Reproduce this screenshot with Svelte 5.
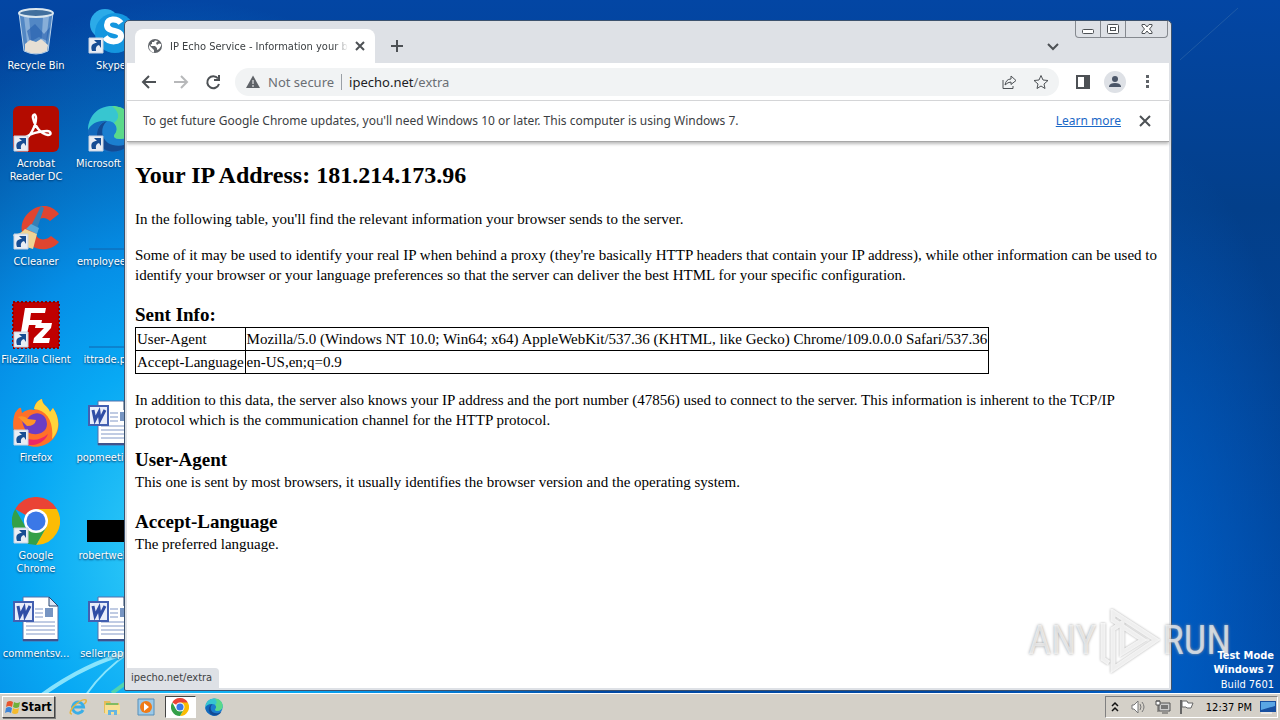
<script>
  const icons = [
    { kind: 'bin', label: 'Recycle Bin', link: false },
    { kind: 'skype', label: 'Skype', link: true },
    { kind: 'acrobat', label: 'Acrobat Reader DC', link: true },
    { kind: 'edge', label: 'Microsoft Ed...', link: true, single: true },
    { kind: 'ccleaner', label: 'CCleaner', link: true },
    { kind: 'line', label: 'employeem...', link: false },
    { kind: 'filezilla', label: 'FileZilla Client', link: true },
    { kind: 'line', label: 'ittrade.png', link: false },
    { kind: 'firefox', label: 'Firefox', link: true },
    { kind: 'word', label: 'popmeeting...', link: false },
    { kind: 'chrome', label: 'Google Chrome', link: true },
    { kind: 'black', label: 'robertwebs...', link: false },
    { kind: 'word', label: 'commentsv...', link: false },
    { kind: 'word', label: 'sellerrapid...', link: false }
  ];
  const rows = [
    ['User-Agent', 'Mozilla/5.0 (Windows NT 10.0; Win64; x64) AppleWebKit/537.36 (KHTML, like Gecko) Chrome/109.0.0.0 Safari/537.36'],
    ['Accept-Language', 'en-US,en;q=0.9']
  ];
</script>

{#snippet chromeMark()}
  <path d="M24 24 3.200 12A24 24 0 0 1 44.800 12Z" fill="#ea4335" />
  <path d="M24 12H44.800A24 24 0 0 1 24 48L34.400 30Z" fill="#fbbc04" />
  <path d="M3.200 12A24 24 0 0 0 24 48L34.400 30H24L13.600 30Z" fill="#34a048" />
  <circle cx="24" cy="24" r="12" fill="#fff" />
  <circle cx="24" cy="24" r="9.500" fill="#3b78e7" />
{/snippet}

{#snippet edgeMark()}
  <circle cx="24" cy="24" r="23" fill="#1b7fd0" />
  <path d="M1 24C2 10 12 1 25 1c13 0 22 9 22 20 0 8-6 13-14 13-6 0-7-3-5-5 4-5 1-13-8-13C10 16 3 22 1 28Z" fill="#37c6d0" />
  <path d="M25 1c13 0 22 9 22 20 0 8-6 13-14 13-6 0-7-3-5-5 3-4 2-8-1-11C35 12 30 5 25 1Z" fill="#5bd98a" />
  <path d="M20 16c-8 1-12 10-8 19 4 8 14 13 24 10-6 3-14 3-20 0C5 40 0 31 1 25c3-6 10-10 19-9Z" fill="#1269bd" />
  <path d="M20 16c-7 6-6 17 1 22 7 4 16 4 23-2-4 8-13 12-22 10C8 43 5 20 20 16Z" fill="#134b94" />
{/snippet}

<div class="screen">
  <main class="desktop">
    <svg class="rays" viewBox="0 0 1280 693" preserveAspectRatio="none" aria-hidden="true">
      <path d="M42 695Q85 664 130 652" />
      <path d="M86 695Q102 671 130 652" class="thin" />
      <path d="M1180 60 1238 8" class="faint" />
      <path d="M112 693 130 680" class="green" />
    </svg>

    <div class="icons">
      {#each icons as icon}
        <button class="shortcut">
          <span class="art">
            <svg viewBox="0 0 48 48" aria-hidden="true">
              {#if icon.kind === 'bin'}
                <path d="M7 6 12 44Q24 50 36 44L41 6Z" fill="#6e9ed0" fill-opacity=".75" stroke="#b8d2eb" />
                <path d="M12 10 16 43H20L17 10ZM31 10 29 43H33L37 10Z" fill="#c8def2" opacity=".45" />
                <path d="m15 24 8-7 9 10 6-7-3 14-8-4-9 5Z" fill="#245eae" opacity=".6" />
                <path d="m13 37 5-4 6 2 5-3 7 6-1 6q-11 5-22 0Z" fill="#e6dfd4" />
                <ellipse cx="24" cy="6" rx="17" ry="4" fill="#416f9e" stroke="#dbe7ef" stroke-width="2" />
              {:else if icon.kind === 'skype'}
                <circle cx="18" cy="17" r="15" fill="#2cabe8" /><circle cx="28" cy="26" r="20" fill="#1496df" />
                <path d="M34 16C30 11 20 11 20 18c0 8 14 4 14 11 0 7-12 7-16 1" fill="none" stroke="#fff" stroke-width="6" />
              {:else if icon.kind === 'acrobat'}
                <rect x="1" y="1" width="46" height="46" rx="6" fill="#b30b00" />
                <path d="M13 34c5-2 11-13 11-21 0-5-4-4-3 0 2 9 8 16 15 17 4 0 3-4-1-4-8 0-17 3-21 6-3 2-3 4-1 2Z" fill="none" stroke="#fff" stroke-width="2.500" />
              {:else if icon.kind === 'edge'}
                {@render edgeMark()}
              {:else if icon.kind === 'ccleaner'}
                <path d="M47 11 38 18C30 10 20 19 23 30c3 9 12 7 16 3l8 6C36 52 14 47 10 29 6 10 33-8 47 11Z" fill="#df4530" />
                <path d="m29 3 3 2-7 21-6-3Z" fill="#347fb5" /><path d="m19 21 8 4-2 6-11-5Z" fill="#57a8d7" />
                <path d="m13 26 12 5-4 15Q7 43 1 32 9 31 13 26Z" fill="#f0d394" />
              {:else if icon.kind === 'filezilla'}
                <rect x="1" y="1" width="46" height="46" fill="#bf0000" stroke="#8d0000" stroke-width="2" stroke-dasharray="2 2" />
                <path d="M13 7H34L33 12H19L18 19H30L29 24H17L14 37H8ZM24 22H40L39 27 30 37H38L37 42H21L22 37 32 27H23Z" fill="#fff" />
              {:else if icon.kind === 'firefox'}
                <path d="M3 14q4-6 6-5l1 5q6-5 13-3c-2-5 3-10 7-11 0 6 6 7 8 13l3-4c7 10 8 23-1 32-9 9-24 9-33 0C0 34 0 23 3 14Z" fill="#ff7028" />
                <path d="M22 10c1-5 4-9 8-10 0 6 6 7 8 13l3-4c8 12 6 24-1 31 2-17-5-29-18-30Z" fill="#ffd43b" />
                <path d="M5 30c4 11 20 15 31 5-4 10-15 13-24 10-5-2-9-8-7-15Z" fill="#ee2866" />
                <path d="M14 24c2-12 20-14 21 1 0 12-19 14-23 3-2-4-1-7-5-9 4-1 8 0 9 4Z" fill="#6b3dc4" />
                <path d="M6 18q6-2 10 2l8 1q-1 6-9 6-5-5-9-9Z" fill="#ff9426" />
              {:else if icon.kind === 'chrome'}
                {@render chromeMark()}
              {:else if icon.kind === 'word'}
                <path d="M11 2H37L46 11V46H11Z" fill="#fff" stroke="#5370ac" />
                <path d="M37 2V11H46Z" fill="#dbe6f6" stroke="#28456f" />
                <path d="M23 14H31M23 18H31M23 22H31M14 27H43M14 31H43M14 35H43M14 39H43" stroke="#8198c7" />
                <rect x="33" y="13" width="8" height="9" fill="#7795c2" /><path d="M11 45H46" stroke="#41538c" stroke-width="2" />
                <rect x="2" y="7" width="19" height="19" fill="#e9edfa" stroke="#4360b1" stroke-width="2" />
                <path d="M6 11 8 21 12 13 13 21 18 11" fill="none" stroke="#304ea6" stroke-width="3" />
              {:else if icon.kind === 'black'}
                <path d="M0 23H48V45H0Z" fill="#000" />
              {:else}
                <path d="M2 46H48" stroke="#1165ae" stroke-width="1" />
              {/if}
              {#if icon.link}
                <path d="M2 31H16V46H2Z" fill="#e9edf4" stroke="#c7d2e2" />
                <path d="M5 44C3 38 6 36 10 36L7 33H14V41L12 38Q8 39 9 44Z" fill="#174d93" />
              {/if}
            </svg>
          </span>
          <span class="label" class:single={icon.single}>{icon.label}</span>
        </button>
      {/each}
    </div>

    <div class="build"><b>Test Mode</b><b>Windows 7</b><span>Build 7601</span></div>

    <section class="window" aria-label="IP Echo Service">
      <header class="tabs">
        <div class="tab">
          <svg class="i16" viewBox="0 0 16 16" aria-hidden="true"><circle cx="8" cy="8" r="7" fill="#5f6368" /><path d="M2 7 7 12V14.500Q1.500 13.500 2 7ZM8 2.500 7 4H5V6L3.500 6.500 4 8H8L10 10V12L12 11 14 8V6L12 5.500 10 7 9 5 11 3Z" fill="#fff" /></svg>
          <span class="title">IP Echo Service - Information your b</span>
          <button aria-label="Close tab"><svg class="i16" viewBox="0 0 16 16"><path d="M4 4 12 12M12 4 4 12" /></svg></button>
        </div>
        <button class="plus" aria-label="New tab"><svg class="i16" viewBox="0 0 16 16"><path d="M2 8H14M8 2V14" /></svg></button>
        <button class="search" aria-label="Search tabs"><svg class="i16" viewBox="0 0 16 16"><path d="M3 6 8 11 13 6" /></svg></button>
        <div class="controls">
          <button aria-label="Minimize"><svg viewBox="0 0 24 16"><rect x="6.500" y="8.500" width="11" height="4" rx="1" /></svg></button>
          <button aria-label="Restore"><svg viewBox="0 0 24 16"><rect x="6.500" y="3.500" width="11" height="9" rx="1" /><rect x="9.500" y="6.500" width="5" height="3" /></svg></button>
          <button class="wide" aria-label="Close"><svg viewBox="0 0 24 16"><path d="M7 3.500H10L12 6 14 3.500H17V5L14.500 8 17 11V12.500H14L12 10 10 12.500H7V11L9.500 8 7 5Z" /></svg></button>
        </div>
      </header>

      <nav class="toolbar">
        <button aria-label="Back"><svg class="i16" viewBox="0 0 16 16"><path d="M15 8H2M8 2 2 8 8 14" /></svg></button>
        <button class="off" aria-label="Forward"><svg class="i16" viewBox="0 0 16 16"><path d="M1 8H14M8 2 14 8 8 14" /></svg></button>
        <button aria-label="Reload"><svg class="i16" viewBox="0 0 16 16"><path d="M13 4.500A6 6 0 1 0 14 10M14 1V6H9" /></svg></button>
        <div class="address">
          <svg class="i16" viewBox="0 0 16 16" aria-hidden="true"><path d="M8 1.500 15 14H1Z" fill="#5f6368" stroke="none" /><path d="M8 6V10M8 11V13" stroke="#fff" /></svg>
          <span class="grey">Not secure</span><i></i>
          <a class="url" href="#extra">ipecho.net<span class="grey">/extra</span></a>
          <button class="share" aria-label="Share"><svg class="i16" viewBox="0 0 16 16"><path d="M2 6V14.500H12V12M4 11Q5 5 10 5V2L15 6.500 10 10.500V8Q7 8 4 11Z" stroke-width="1" /></svg></button>
          <button aria-label="Bookmark"><svg class="i16" viewBox="0 0 16 16"><path d="m8 1.500 2 4.500 5 .5-4 3.500 1 4.500-4-2.500-4 2.500 1-4.500L1 6.500 6 6Z" /></svg></button>
        </div>
        <button aria-label="Side panel"><svg class="i16" viewBox="0 0 16 16"><path d="M2 2H14V14H2Z" /><path d="M10 2H14V14H10Z" fill="#4d5155" /></svg></button>
        <button class="person" aria-label="Profile"><svg class="i16" viewBox="0 0 16 16"><circle cx="8" cy="5" r="3" fill="#4b5668" stroke="none" /><path d="M2 13V12Q3 9 8 9T14 12V13Z" fill="#4b5668" stroke="none" /></svg></button>
        <button aria-label="Menu"><svg class="i16" viewBox="0 0 16 16"><path d="M7 1H10V4H7ZM7 6H10V9H7ZM7 11H10V14H7Z" fill="#5f6368" stroke="none" /></svg></button>
      </nav>

      <div class="notice">
        <span>To get future Google Chrome updates, you'll need Windows 10 or later. This computer is using Windows 7.</span>
        <a href="#more">Learn more</a>
        <button aria-label="Dismiss"><svg class="i16" viewBox="0 0 16 16"><path d="M3 3 13 13M13 3 3 13" /></svg></button>
      </div>

      <article>
        <h1>Your IP Address: 181.214.173.96</h1>
        <p>In the following table, you'll find the relevant information your browser sends to the server.</p>
        <p>Some of it may be used to identify your real IP when behind a proxy (they're basically HTTP headers that contain your IP address), while other information can be used to identify your browser or your language preferences so that the server can deliver the best HTML for your specific configuration.</p>
        <h2>Sent Info:</h2>
        <table><tbody>
          {#each rows as [name, value]}<tr><th scope="row">{name}</th><td>{value}</td></tr>{/each}
        </tbody></table>
        <p>In addition to this data, the server also knows your IP address and the port number (47856) used to connect to the server. This information is inherent to the TCP/IP protocol which is the communication channel for the HTTP protocol.</p>
        <h2>User-Agent</h2>
        <p class="tight">This one is sent by most browsers, it usually identifies the browser version and the operating system.</p>
        <h2>Accept-Language</h2>
        <p class="tight">The preferred language.</p>
      </article>
      <div class="status">ipecho.net/extra</div>
    </section>

    <div class="watermark">
      <span>ANY</span>
      <svg viewBox="0 0 60 64" aria-hidden="true"><path d="M13 3 56 31 13 60V20L22 14V44L43 31 13 11ZM3 14V50L9 54" /></svg>
      <span>RUN</span>
    </div>
  </main>

  <footer class="taskbar">
    <button class="start"><svg viewBox="0 0 16 16" aria-hidden="true"><path d="M2 3Q5 1 8 3L7 8Q4 6 1 8Z" fill="#e8552d" /><path d="M9 3Q12 5 15 3L14 8Q11 10 8 8Z" fill="#70b13c" /><path d="M1 9Q4 7 7 9L6 14Q3 12 0 14Z" fill="#3d85d8" /><path d="M8 9Q11 11 14 9L13 14Q10 16 7 14Z" fill="#f5bb2c" /></svg>Start</button>
    <button class="task" aria-label="Internet Explorer"><svg viewBox="0 0 18 18"><path d="M14 12A5.500 5.500 0 1 1 14.500 9H5" fill="none" stroke="#3aaee6" stroke-width="3" /><path d="M3 16Q-1 16 4 9 13 0 17 2 18 4 15 6" fill="none" stroke="#e8b53b" stroke-width="1.500" /></svg></button>
    <button class="task" aria-label="Explorer"><svg viewBox="0 0 18 18"><path d="M1 3H7L8 5H16V15H1Z" fill="#e5bd58" /><path d="M3 5H15V8H3Z" fill="#80bb62" /><path d="M2 7H17V16H2Z" fill="#f7df94" /><path d="M5 17V12H14V17H11V14H8V17Z" fill="#66b5df" /></svg></button>
    <button class="task" aria-label="Media Player"><svg viewBox="0 0 18 18"><path d="M1 1H17V17H1Z" fill="#9bc9e8" stroke="#568fb9" /><circle cx="9" cy="9" r="6" fill="#f07b16" /><path d="m7 5 5 4-5 4Z" fill="#fff" /></svg></button>
    <button class="task current" aria-label="Chrome"><svg viewBox="0 0 48 48">{@render chromeMark()}</svg></button>
    <button class="task" aria-label="Edge"><svg viewBox="0 0 48 48">{@render edgeMark()}</svg></button>
    <div class="tray">
      <svg class="i16" viewBox="0 0 16 16" aria-hidden="true"><path d="m5 7 3-3 3 3M5 12l3-3 3 3" fill="none" stroke="#111" stroke-width="1.500" /></svg>
      <svg class="i16" viewBox="0 0 16 16" aria-hidden="true"><path d="M1 6H3L7 2V14L3 10H1Z" fill="#fff" stroke="#777" /><path d="M9 5Q11 8 9 11M11 3Q15 8 11 13" fill="none" stroke="#777" /></svg>
      <svg class="i16" viewBox="0 0 16 16" aria-hidden="true"><path d="M4 4H15V12H4ZM7 14H13" fill="#ccc" stroke="#555" /><path d="M6 6H13V10H6Z" fill="#777" /><path d="M1 2H5V6H1ZM2 1V3M4 1V3M3 6V13" fill="#fff" stroke="#555" /></svg>
      <svg class="i16" viewBox="0 0 16 16" aria-hidden="true"><path d="M2 1V15" stroke="#666" stroke-width="2" /><path d="M3 2H8L9 4H14L12 9H8L7 8H3Z" fill="#fff" stroke="#666" /></svg>
      <time>12:37 PM</time>
      <svg class="i16" viewBox="0 0 16 16" aria-hidden="true"><path d="M0 2H16V13H0Z" fill="#174f9f" /><path d="M1 3H15V7L1 11Z" fill="#5aa6e4" /><path d="M1 14H12" stroke="#fff" /></svg>
    </div>
  </footer>
</div>

<style>
  :global(body) { margin: 0; }
  .screen { min-height: 100vh; display: flex; flex-direction: column; font: 11px/13px "DejaVu Sans Condensed", "DejaVu Sans", sans-serif; overflow: hidden; }
  button { font: inherit; color: inherit; border: 0; padding: 0; background: none; display: grid; place-items: center; }
  svg { display: block; }
  .i16 { width: 16px; height: 16px; flex: none; }
  .desktop { position: relative; flex: 1; background: radial-gradient(ellipse 34% 80% at 14% 80%, #36d0f8 0, #08a9f4 35%, #058ee6 55%, transparent 100%), radial-gradient(ellipse 14% 70% at 89% 90%, #0060c8 0, transparent 100%), linear-gradient(180deg, #0346a4 0, #033f8a 30%, #0048a4 100%); }
  .rays { position: absolute; width: 100%; height: 100%; fill: none; stroke: #a7f2ff; stroke-width: 4; opacity: .8; }
  .rays .thin { stroke-width: 2; }
  .rays .faint { stroke: #4a7cb0; stroke-width: 1; opacity: .5; }
  .rays .green { stroke: #5fdca0; stroke-width: 4; }
  .icons { display: grid; grid-template-columns: 72px 72px; grid-auto-rows: 98px; column-gap: 3px; padding-top: 7px; width: 147px; position: relative; }
  .shortcut { color: #fff; display: flex; flex-direction: column; align-items: center; gap: 4px; text-shadow: 0 1px 2px #003060; }
  .art { width: 48px; height: 48px; }
  .label { text-align: center; }
  .single { white-space: nowrap; }
  .build { position: absolute; right: 6px; bottom: 0; color: #fff; display: grid; justify-items: end; line-height: 14px; z-index: 2; }
  .build span { line-height: 16px; }
  .window { position: absolute; inset: 20px 108px 2px 124px; background: #dee1e6; border: 1px solid #3c526e; border-radius: 5px 5px 2px 2px; padding: 0 2px 2px; display: flex; flex-direction: column; }
  .window svg:not([aria-hidden]) { fill: none; stroke: #4d5155; stroke-width: 2; }
  .window .address svg:not([aria-hidden]) { stroke-width: 1; }
  .tabs { height: 42px; display: flex; align-items: flex-end; flex: none; }
  .tab { width: 220px; height: 34px; padding: 0 8px 0 12px; margin-left: 8px; box-sizing: content-box; border-radius: 8px 8px 0 0; background: #fff; display: flex; align-items: center; gap: 4px; color: #3c4043; }
  .title { flex: 1; margin-left: 3px; white-space: nowrap; mask-image: linear-gradient(90deg, #000 92%, transparent); }
  .plus { margin: 0 0 9px 14px; }
  .search { margin: 0 14px 9px auto; }
  .controls { align-self: flex-start; display: flex; border: 1px solid #85898f; border-top: 0; border-radius: 0 0 4px 4px; margin-right: 1px; }
  .controls button { width: 25px; height: 16px; border-right: 1px solid #85898f; }
  .controls .wide { width: 41px; border: 0; }
  .controls svg { width: 24px; height: 16px; }
  .window .controls svg:not([aria-hidden]) { stroke-width: 1; fill: #fff; }
  .toolbar { height: 37px; background: #fff; display: flex; align-items: center; gap: 16px; padding: 0 14px; border-bottom: 1px solid #d5d6d8; flex: none; }
  .off { opacity: .4; }
  .address { flex: 1; height: 28px; border-radius: 14px; background: #f1f3f4; display: flex; align-items: center; gap: 7px; padding: 0 10px; font: 13px/18px "Noto Sans", sans-serif; margin-left: -2px; }
  .grey { color: #6b6f74; }
  .address i { width: 1px; height: 16px; background: #9aa0a6; }
  .url { flex: 1; color: #202124; text-decoration: none; }
  .share { margin-right: 9px; }
  .person { width: 22px; height: 22px; border-radius: 50%; background: #dee1e6; margin: 0 -3px; }
  .notice { background: #fff; height: 40px; padding: 0 16px; display: flex; align-items: center; border-bottom: 1px solid #a8a8a8; box-shadow: 0 2px 3px #bbb; z-index: 1; flex: none; font: 12px/16px "Noto Sans", sans-serif; color: #3c4043; }
  .notice span { flex: 1; }
  .notice a { color: #1a68c7; margin-right: 16px; }
  article { background: #fff; flex: 1; padding: 17px 8px 0; color: #000; font: 15px/20px "Liberation Serif", serif; }
  h1 { font-size: 24px; line-height: 32px; margin: 0 0 18px; }
  h2 { font-size: 19px; line-height: 24px; margin: 18px 0 0; }
  p { margin: 0 0 16px; }
  .tight { margin: 0; }
  table { border-collapse: collapse; margin-bottom: 16px; }
  th, td { font-weight: 400; text-align: left; border: 1px solid #000; padding: 1px; }
  .status { position: absolute; left: 2px; bottom: 2px; background: #dee1e6; color: #3c4043; padding: 3px 7px 4px 4px; border-radius: 0 4px 0 0; }
  .watermark { position: absolute; right: 49px; bottom: 20px; display: flex; align-items: center; gap: 3px; font: 40px/50px "Liberation Sans Narrow", "Roboto Condensed", "Open Sans Condensed", "Liberation Sans", sans-serif; color: #ffffffaa; text-shadow: 0 0 3px #999; }
  .watermark svg { width: 60px; height: 64px; fill: none; stroke: #fffc; stroke-width: 5; filter: drop-shadow(0 0 1px #999); }
  .taskbar { background: #d4d0c8; border-top: 1px solid #fff; min-height: 27px; box-sizing: border-box; display: flex; align-items: center; gap: 3px; padding: 0 2px; }
  .start { display: flex; align-items: center; height: 22px; padding: 0 2px; margin-right: 5px; font-size: 12px; font-weight: 700; border: 1px solid; border-color: #fff #444 #444 #fff; box-shadow: 1px 1px #808080; }
  .start svg { width: 16px; height: 16px; }
  .task { width: 31px; height: 22px; box-sizing: border-box; }
  .task svg { width: 18px; height: 18px; }
  .current { background: #fff; border: 1px solid; border-color: #444 #fff #fff #444; }
  .tray { margin-left: auto; height: 20px; display: flex; align-items: center; gap: 8px; padding: 0 1px; border: 1px solid; border-color: #808080 #fff #fff #808080; }
  .tray time { margin-left: 3px; }
</style>
